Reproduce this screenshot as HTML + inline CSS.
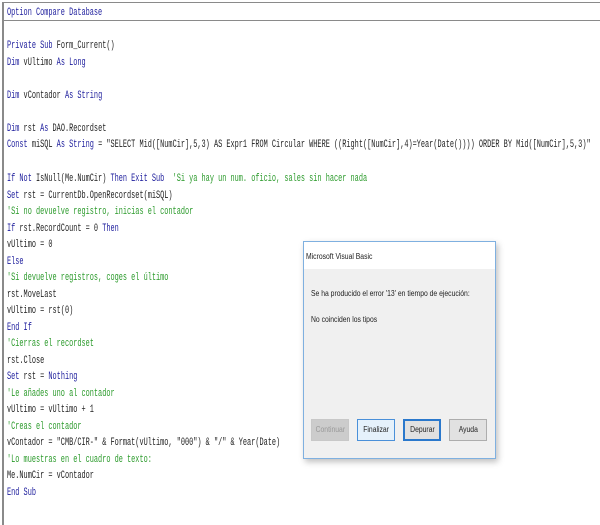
<!DOCTYPE html>
<html><head><meta charset="utf-8"><style>
html,body{margin:0;padding:0}
body{width:600px;height:525px;background:#fff;position:relative;overflow:hidden;font-family:"Liberation Mono",monospace}
.wrap{position:absolute;left:0;top:0;width:600px;height:525px;overflow:hidden}
.frame{position:absolute;left:2px;top:2px;width:596px;height:523px;border-left:2px solid #8a8a8a;border-top:1px solid #8a8a8a}
.hdr{position:absolute;left:4px;top:20px;width:596px;height:1px;background:#8a8a8a}
.l{position:absolute;left:7px;font-size:11px;line-height:12px;white-space:pre;transform:scaleX(.627);transform-origin:0 0;color:#222}
.k{color:#1c1c9c}.c{color:#2a9a2a}
.dlg{position:absolute;left:303px;top:241px;width:191px;height:216px;border:1px solid #7fb0e0;background:#f0f0f0;box-shadow:2px 3px 6px rgba(0,0,0,.25);font-family:"Liberation Sans",sans-serif;font-size:8px;color:#222}
.tb{position:absolute;left:0;top:0;width:191px;height:27px;background:#fff}
.t{position:absolute;white-space:nowrap;transform:scaleX(.85);transform-origin:0 0}
.b{position:absolute;top:177px;width:36px;height:20px;border:1px solid #adadad;background:#e1e1e1;text-align:center;line-height:20px}
.b span{display:inline-block;transform:scaleX(.85)}
</style></head><body>
<div class="wrap">
<div class="frame"></div><div class="hdr"></div>
<div class="l k" style="top:7px">Option Compare Database</div>
<div class="l" style="top:40px"><span class="k">Private Sub</span> Form_Current()</div>
<div class="l" style="top:57px"><span class="k">Dim</span> vUltimo <span class="k">As Long</span></div>
<div class="l" style="top:90px"><span class="k">Dim</span> vContador <span class="k">As String</span></div>
<div class="l" style="top:123px"><span class="k">Dim</span> rst <span class="k">As</span> DAO.Recordset</div>
<div class="l" style="top:139px"><span class="k">Const</span> miSQL <span class="k">As String</span> = "SELECT Mid([NumCir],5,3) AS Expr1 FROM Circular WHERE ((Right([NumCir],4)=Year(Date()))) ORDER BY Mid([NumCir],5,3)"</div>
<div class="l" style="top:173px"><span class="k">If Not</span> IsNull(Me.NumCir) <span class="k">Then Exit Sub</span>  <span class="c">'Si ya hay un num. oficio, sales sin hacer nada</span></div>
<div class="l" style="top:190px"><span class="k">Set</span> rst = CurrentDb.OpenRecordset(miSQL)</div>
<div class="l c" style="top:206px">'Si no devuelve registro, inicias el contador</div>
<div class="l" style="top:223px"><span class="k">If</span> rst.RecordCount = 0 <span class="k">Then</span></div>
<div class="l" style="top:239px">vUltimo = 0</div>
<div class="l k" style="top:256px">Else</div>
<div class="l c" style="top:272px">'Si devuelve registros, coges el último</div>
<div class="l" style="top:289px">rst.MoveLast</div>
<div class="l" style="top:305px">vUltimo = rst(0)</div>
<div class="l k" style="top:322px">End If</div>
<div class="l c" style="top:338px">'Cierras el recordset</div>
<div class="l" style="top:355px">rst.Close</div>
<div class="l" style="top:371px"><span class="k">Set</span> rst = <span class="k">Nothing</span></div>
<div class="l c" style="top:388px">'Le añades uno al contador</div>
<div class="l" style="top:404px">vUltimo = vUltimo + 1</div>
<div class="l c" style="top:421px">'Creas el contador</div>
<div class="l" style="top:437px">vContador = "CMB/CIR-" &amp; Format(vUltimo, "000") &amp; "/" &amp; Year(Date)</div>
<div class="l c" style="top:454px">'Lo muestras en el cuadro de texto:</div>
<div class="l" style="top:470px">Me.NumCir = vContador</div>
<div class="l k" style="top:487px">End Sub</div>
<div class="dlg">
<div class="tb"></div>
<div class="t" style="left:2px;top:10px">Microsoft Visual Basic</div>
<div class="t" style="left:7px;top:47px">Se ha producido el error '13' en tiempo de ejecución:</div>
<div class="t" style="left:7px;top:73px">No coinciden los tipos</div>
<div class="b" style="left:7px;color:#999;border-color:#c8c8c8;background:#ccc"><span>Continuar</span></div>
<div class="b" style="left:53px;border-color:#4a90d9;background:#e5f1fb"><span>Finalizar</span></div>
<div class="b" style="left:99px;border:2px solid #2a78cc;height:18px;line-height:18px;width:34px"><span>Depurar</span></div>
<div class="b" style="left:145px"><span>Ayuda</span></div>
</div>
</div>
</body></html>
